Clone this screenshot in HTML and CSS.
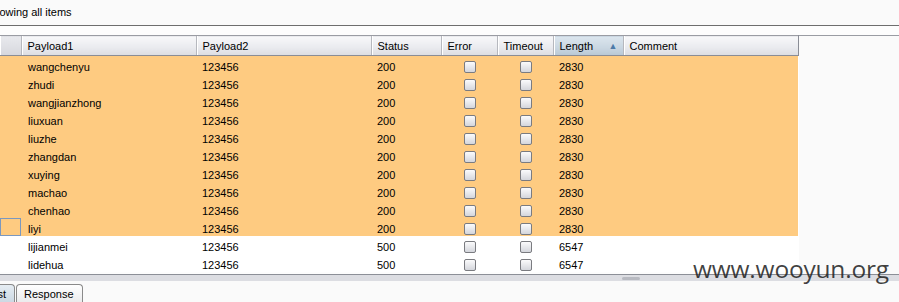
FILE: index.html
```html
<!DOCTYPE html>
<html>
<head>
    <title>Intruder Results</title>
    <meta charset="UTF-8">
    <link rel="stylesheet" href="styles.css">
</head>
<body>
    <div class="filter">Showing all items</div>

    <div class="grid-wrap">
        <table class="results">
            <colgroup>
                <col class="c-num"><col class="c-wide"><col class="c-wide"><col class="c-mid">
                <col class="c-small"><col class="c-small"><col class="c-mid"><col class="c-wide">
            </colgroup>
            <thead>
                <tr>
                    <th></th>
                    <th>Payload1</th>
                    <th>Payload2</th>
                    <th>Status</th>
                    <th>Error</th>
                    <th>Timeout</th>
                    <th class="sorted">Length <span class="arrow">&#9650;</span></th>
                    <th>Comment</th>
                </tr>
            </thead>
            <tbody id="rows"></tbody>
        </table>
        <div class="blank"></div>
    </div>

    <div class="scroll"><span class="thumb"></span></div>

    <div class="tabs">
        <div class="tab tab-request">Request</div>
        <div class="tab">Response</div>
    </div>

    <div class="watermark">www.wooyun.org</div>

    <script>
        var data = [
            ["wangchenyu", 200, 2830, true],
            ["zhudi", 200, 2830, true],
            ["wangjianzhong", 200, 2830, true],
            ["liuxuan", 200, 2830, true],
            ["liuzhe", 200, 2830, true],
            ["zhangdan", 200, 2830, true],
            ["xuying", 200, 2830, true],
            ["machao", 200, 2830, true],
            ["chenhao", 200, 2830, true],
            ["liyi", 200, 2830, true],
            ["lijianmei", 500, 6547, false],
            ["lidehua", 500, 6547, false]
        ];
        var html = "";
        data.forEach(function(r) {
            var cls = r[3] ? "hit" : "";
            var first = (r[0] === "liyi") ? '<td class="focus"></td>' : '<td></td>';
            html += '<tr class="' + cls + '">' + first +
                '<td>' + r[0] + '</td><td>123456</td><td>' + r[1] + '</td>' +
                '<td class="chk"><span class="box"></span></td>' +
                '<td class="chk"><span class="box"></span></td>' +
                '<td>' + r[2] + '</td><td></td></tr>';
        });
        document.getElementById("rows").innerHTML = html;
    </script>
</body>
</html>
```

FILE: styles.css
```css
body {
    margin: 0;
    background: #fafafa;
    font-family: 'Liberation Sans', Arial, sans-serif;
    font-size: 11px;
    color: #000000;
    position: relative;
    height: 302px;
    overflow: hidden;
}
.filter {
    height: 25px;
    line-height: 24px;
    margin-left: -14px;
    border-bottom: 1px solid #6e6e6e;
}
.grid-wrap {
    display: flex;
    align-items: flex-start;
    padding-top: 9px;
    background: #fdfdfd;
    height: 249px;
    overflow: hidden;
    border-bottom: 1px solid #8c8f97;
    box-sizing: border-box;
}
.results {
    border-collapse: collapse;
    table-layout: fixed;
    width: 798px;
    flex: none;
    background: #ffffff;
}
.blank {
    flex: 1;
    align-self: stretch;
    background: #fafafa;
    border-top: 1px solid #9a9ca3;
}
.c-num { width: 21px; }
.c-wide { width: 175px; }
.c-mid { width: 70px; }
.c-small { width: 56px; }
th {
    height: 20px;
    padding: 1px 0 0 6px;
    box-sizing: border-box;
    text-align: left;
    font-weight: normal;
    background: linear-gradient(#f8f8fa, #e9eaee 60%, #dcdde2);
    border-top: 1px solid #9a9ca3;
    border-bottom: 1px solid #8a8d96;
    border-left: 1px solid #b6b8be;
    box-shadow: inset 1px 0 0 #ffffff;
    white-space: nowrap;
}
th:first-child {
    border-left: none;
    background: linear-gradient(#e8e9ed, #d6d7dd);
}
th:last-child {
    border-right: 1px solid #8a8d96;
}
th.sorted {
    background: linear-gradient(#dce6ee, #c9d6e1 60%, #b9c8d5);
    position: relative;
}
.arrow {
    position: absolute;
    right: 5px;
    top: 5px;
    font-size: 9px;
    color: #4d7aa8;
}
td {
    height: 18px;
    padding: 4px 0 0 6px;
    box-sizing: border-box;
    white-space: nowrap;
}
td:nth-child(2) { padding-left: 7px; }
tr.hit td { background: #fecb81; }
td.focus {
    box-shadow: inset 0 0 0 1px #7b98bf;
}
td.chk {
    padding: 5px 0 0 0;
    vertical-align: top;
}
.box {
    display: block;
    width: 10px;
    height: 10px;
    margin: 0 auto;
    position: relative;
    left: 1px;
    border: 1px solid #7a7b80;
    border-radius: 2px;
    background: linear-gradient(#fbfbfc, #d4d6dc);
}
.scroll {
    height: 6px;
    background: #dcdde2;
    position: relative;
}
.thumb {
    position: absolute;
    left: 622px;
    top: 2px;
    width: 18px;
    height: 3px;
    border-radius: 2px;
    background: #b8bac1;
}
.tabs {
    display: flex;
    padding-top: 3px;
}
.tab {
    height: 18px;
    line-height: 19px;
    padding: 0 8px 0 7px;
    border: 1px solid #8a8a8a;
    border-bottom: none;
    border-radius: 4px 4px 0 0;
    background: linear-gradient(#ffffff, #eaeaec);
    font-size: 11px;
    margin-left: 1px;
}
.tab-request {
    margin-left: -43px;
    background: linear-gradient(#e6edf3, #cbd7e2);
}
.watermark {
    position: absolute;
    left: 693px;
    top: 252px;
    font-family: 'Open Sans', 'DejaVu Sans', sans-serif;
    font-size: 24.5px;
    color: rgba(30, 30, 30, 0.85);
    letter-spacing: -0.2px;
}
```
